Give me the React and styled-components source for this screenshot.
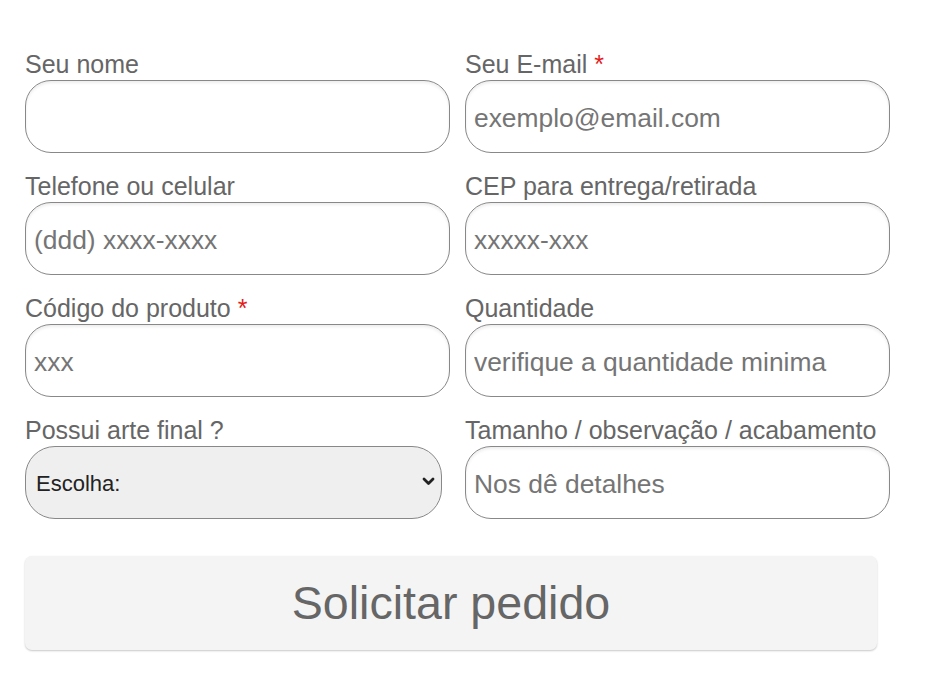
import React, { useState } from 'react'
import styled, { createGlobalStyle } from 'styled-components'

const GlobalStyle = createGlobalStyle`
  body {
    margin: 0;
    background: #fff;
    font-family: "Liberation Sans", Arial, sans-serif;
  }
`

const Page = styled.div`
  padding: 51px 0 30px 25px;
  width: 865px;
`

const Form = styled.form`
  display: grid;
  grid-template-columns: 425px 425px;
  column-gap: 15px;
  row-gap: 20px;
`

const Field = styled.div`
  display: flex;
  flex-direction: column;
`

const Label = styled.label`
  font-size: 25px;
  line-height: 27px;
  margin-bottom: 2px;
  color: #666;
  white-space: nowrap;
`

const Required = styled.span`
  color: #e21b1b;
`

const Input = styled.input`
  box-sizing: border-box;
  width: 100%;
  height: 73px;
  padding: 3px 8px 0;
  border: 1px solid #888;
  border-radius: 26px;
  background: #fff;
  box-shadow: inset 0 2px 3px rgba(0, 0, 0, 0.07);
  font-family: "Liberation Sans", Arial, sans-serif;
  font-size: 26.4px;
  color: #333;
  outline: none;
  &::placeholder {
    color: #757575;
  }
`

const SelectWrap = styled.div`
  position: relative;
  width: 417px;
`

const Select = styled.select`
  box-sizing: border-box;
  width: 100%;
  height: 73px;
  padding: 2px 40px 0 10px;
  border: 1px solid #888;
  border-radius: 30px;
  background-color: #efefef;
  appearance: none;
  font-family: "Liberation Sans", Arial, sans-serif;
  font-size: 22px;
  color: #222;
  outline: none;
`

const Chevron = styled.svg`
  position: absolute;
  right: 7px;
  top: 31px;
  width: 13px;
  height: 9px;
  pointer-events: none;
`

const ButtonRow = styled.div`
  grid-column: 1 / 3;
  padding-top: 17px;
`

const Button = styled.button`
  width: 852px;
  height: 94px;
  border: none;
  border-radius: 7px;
  background: #f4f4f4;
  box-shadow: 0 1px 2px rgba(0, 0, 0, 0.22);
  color: #666;
  font-family: "Liberation Sans", Arial, sans-serif;
  font-size: 46.6px;
  cursor: pointer;
`

const fields = [
  { name: 'nome', label: 'Seu nome' },
  { name: 'email', label: 'Seu E-mail', required: true, placeholder: 'exemplo@email.com', type: 'email' },
  { name: 'telefone', label: 'Telefone ou celular', placeholder: '(ddd) xxxx-xxxx', type: 'tel' },
  { name: 'cep', label: 'CEP para entrega/retirada', placeholder: 'xxxxx-xxx' },
  { name: 'codigo', label: 'Código do produto', required: true, placeholder: 'xxx' },
  { name: 'quantidade', label: 'Quantidade', placeholder: 'verifique a quantidade minima' },
]

const App = () => {
  const [inputs, setInputs] = useState({})

  const handleChange = (e) => {
    setInputs((prev) => ({ ...prev, [e.target.name]: e.target.value }))
  }

  return (
    <Page>
      <GlobalStyle />
      <Form onSubmit={(e) => e.preventDefault()}>
        {fields.map((f) => (
          <Field key={f.name}>
            <Label htmlFor={f.name}>
              {f.label}
              {f.required && <Required> *</Required>}
            </Label>
            <Input
              id={f.name}
              name={f.name}
              type={f.type || 'text'}
              placeholder={f.placeholder}
              value={inputs[f.name] || ''}
              onChange={handleChange}
            />
          </Field>
        ))}
        <Field>
          <Label htmlFor='arte'>Possui arte final ?</Label>
          <SelectWrap>
            <Select id='arte' name='arte' value={inputs.arte || ''} onChange={handleChange}>
              <option value=''>Escolha:</option>
              <option value='sim'>Sim</option>
              <option value='nao'>Não</option>
            </Select>
            <Chevron viewBox='0 0 13 9'>
              <path d='M2 2 L6.5 6.5 L11 2' fill='none' stroke='#222' strokeWidth='2.8' strokeLinecap='round' strokeLinejoin='round' />
            </Chevron>
          </SelectWrap>
        </Field>
        <Field>
          <Label htmlFor='detalhes'>Tamanho / observação / acabamento</Label>
          <Input
            id='detalhes'
            name='detalhes'
            placeholder='Nos dê detalhes'
            value={inputs.detalhes || ''}
            onChange={handleChange}
          />
        </Field>
        <ButtonRow>
          <Button type='submit'>Solicitar pedido</Button>
        </ButtonRow>
      </Form>
    </Page>
  )
}

export default App
